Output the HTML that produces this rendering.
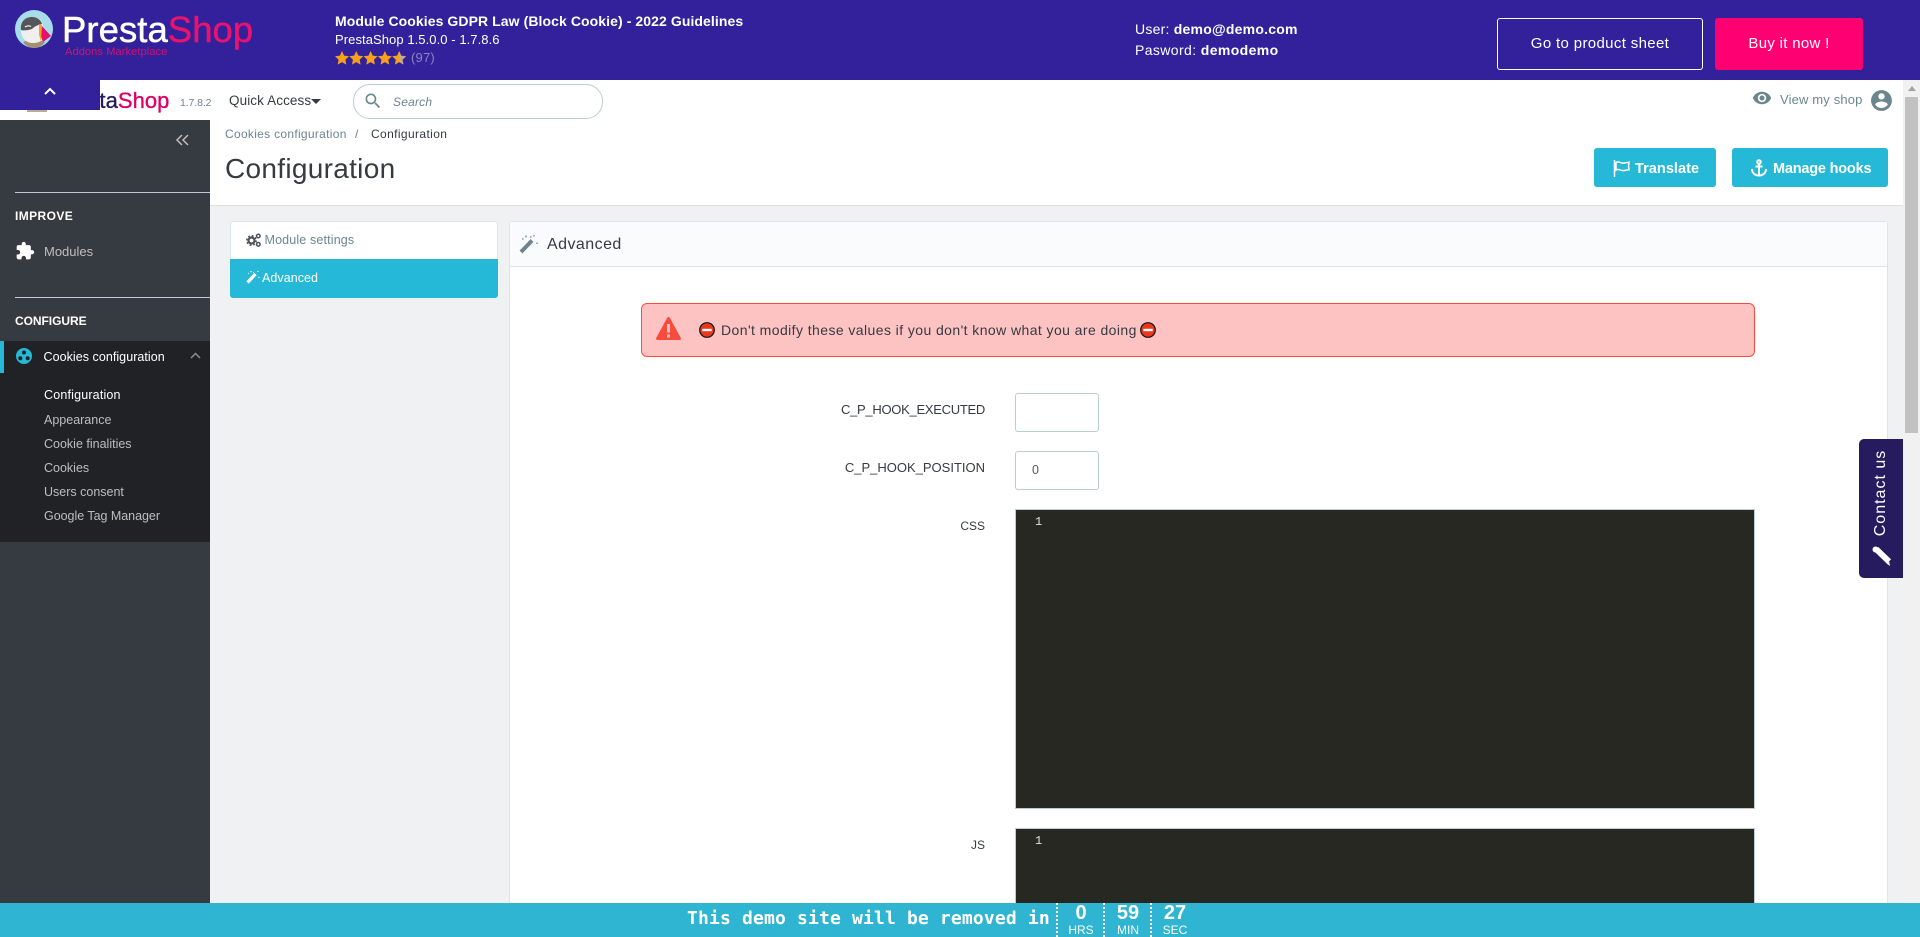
<!DOCTYPE html>
<html lang="en"><head><meta charset="utf-8"><title>Configuration</title>
<style>
html,body{margin:0;padding:0;width:1920px;height:937px;overflow:hidden;background:#fff}
body{position:relative;font-family:"Liberation Sans",sans-serif;color:#363a41}
.a{position:absolute}
.t{position:absolute;white-space:nowrap;height:20px;line-height:20px}
.r{text-align:right}
.b{font-weight:700}
svg{position:absolute;display:block}
</style></head><body>

<!-- content background -->
<div class="a" style="left:210px;top:206px;width:1710px;height:731px;background:#eff1f2"></div>
<div class="a" style="left:210px;top:205px;width:1693px;height:1px;background:#dfdfdf"></div>

<!-- nav -->
<div class="t" style="left:54px;top:91px;font-size:22px;color:#251b5b;letter-spacing:.05px;-webkit-text-stroke:.35px">Presta<span style="color:#df0067">Shop</span></div>
<div class="a" style="left:27px;top:110px;width:20px;height:2px;background:#b9ab97"></div>
<div class="t" style="left:180px;top:93px;font-size:10.5px;letter-spacing:-.1px;color:#6c868e">1.7.8.2</div>
<div class="t" style="left:229px;top:91px;font-size:13.5px;letter-spacing:.1px;color:#363a41">Quick Access</div>
<div class="a" style="left:311px;top:99px;width:0;height:0;border-left:5px solid transparent;border-right:5px solid transparent;border-top:5px solid #363a41"></div>
<div class="a" style="left:353px;top:84px;width:248px;height:33px;border:1px solid #bbcdd2;border-radius:17px"></div>
<svg style="left:363px;top:91px" width="20" height="20" viewBox="0 0 24 24" fill="#6c868e"><path d="M15.5 14h-.79l-.28-.27A6.47 6.47 0 0 0 16 9.5 6.5 6.5 0 1 0 9.5 16c1.61 0 3.09-.59 4.23-1.57l.27.28v.79l5 4.99L20.49 19l-4.99-5zm-6 0C7.01 14 5 11.99 5 9.5S7.01 5 9.5 5 14 7.01 14 9.5 11.99 14 9.5 14z"/></svg>
<div class="t" style="left:393px;top:92px;font-size:12px;font-style:italic;letter-spacing:.2px;color:#6c868e">Search</div>

<svg style="left:1752px;top:88px" width="20" height="20" viewBox="0 0 24 24" fill="#6c868e"><path d="M12 4.5C7 4.5 2.73 7.61 1 12c1.73 4.39 6 7.5 11 7.5s9.27-3.11 11-7.5c-1.73-4.39-6-7.5-11-7.5zM12 17c-2.76 0-5-2.24-5-5s2.24-5 5-5 5 2.24 5 5-2.24 5-5 5zm0-8c-1.66 0-3 1.34-3 3s1.34 3 3 3 3-1.34 3-3-1.34-3-3-3z"/></svg>
<div class="t" style="left:1780px;top:90px;font-size:13px;letter-spacing:.15px;color:#6c868e">View my shop</div>
<svg style="left:1869px;top:88px" width="25" height="25" viewBox="0 0 24 24" fill="#6c868e"><path d="M12 2C6.48 2 2 6.48 2 12s4.48 10 10 10 10-4.48 10-10S17.52 2 12 2zm0 3c1.66 0 3 1.34 3 3s-1.34 3-3 3-3-1.34-3-3 1.34-3 3-3zm0 14.2c-2.5 0-4.71-1.28-6-3.22.03-1.99 4-3.08 6-3.08 1.99 0 5.97 1.09 6 3.08-1.29 1.94-3.5 3.22-6 3.22z"/></svg>

<!-- page head -->
<div class="t" style="left:225px;top:124px;font-size:12px;letter-spacing:.3px;color:#6c868e">Cookies configuration</div>
<div class="t" style="left:355px;top:124px;font-size:12px;color:#6c868e">/</div>
<div class="t" style="left:371px;top:124px;font-size:12px;letter-spacing:.38px;color:#363a41">Configuration</div>
<div class="t" style="left:225px;top:159px;font-size:28px;color:#363a41;letter-spacing:.3px">Configuration</div>

<div class="a" style="left:1594px;top:148px;width:122px;height:39px;background:#25b9d7;border-radius:3px"></div>
<svg style="left:1613px;top:160px" width="18" height="17" viewBox="0 0 18 17" fill="none" stroke="#fff" stroke-width="1.5"><path d="M1.500 0v17M3 2.500c3-1.800 5 1.200 8 .6 2-.4 3.500-.6 5-.8-.6 2.600-.6 5 0 7.500-2 .2-3.500.5-5 .8-3 .6-5-2.400-8-.6z"/></svg>
<div class="t b" style="left:1635px;top:159px;font-size:14.5px;color:#fff;letter-spacing:.05px">Translate</div>
<div class="a" style="left:1732px;top:148px;width:156px;height:39px;background:#25b9d7;border-radius:3px"></div>
<svg style="left:1750px;top:159px" width="18" height="19" viewBox="0 0 18 19" fill="none" stroke="#fff" stroke-width="2"><circle cx="9" cy="3" r="1.800"/><path d="M5.500 7.500h7M9 5v12M2 10c0 4 3 6.500 7 6.500s7-2.500 7-6.500"/></svg>
<div class="t b" style="left:1773px;top:159px;font-size:14.5px;color:#fff;letter-spacing:-.2px">Manage hooks</div>

<!-- sidebar -->
<div class="a" style="left:0;top:120px;width:210px;height:817px;background:#363a41"></div>
<svg style="left:175px;top:134px" width="15" height="12" viewBox="0 0 15 12" fill="none" stroke="#bebebe" stroke-width="1.500"><path d="M7 1 2 6l5 5M13 1 8 6l5 5"/></svg>
<div class="a" style="left:15px;top:192px;width:195px;height:1px;background:#bbcdd2"></div>
<div class="t b" style="left:15px;top:206px;font-size:12px;color:#fff;letter-spacing:.4px">IMPROVE</div>
<svg style="left:15px;top:241px" width="20" height="20" viewBox="0 0 24 24" fill="#fff"><path d="M20.500 11H19V7c0-1.100-.9-2-2-2h-4V3.500C13 2.120 11.880 1 10.500 1S8 2.120 8 3.500V5H4c-1.100 0-1.990.9-1.990 2v3.800H3.500c1.490 0 2.700 1.210 2.700 2.700s-1.210 2.700-2.700 2.700H2V20c0 1.100.9 2 2 2h3.800v-1.500c0-1.490 1.210-2.700 2.700-2.700 1.490 0 2.700 1.210 2.700 2.700V22H17c1.100 0 2-.9 2-2v-4h1.500c1.380 0 2.500-1.120 2.500-2.500S21.880 11 20.500 11z"/></svg>
<div class="t" style="left:44px;top:242px;font-size:13px;color:#bebebe">Modules</div>
<div class="a" style="left:15px;top:297px;width:195px;height:1px;background:#bbcdd2"></div>
<div class="t b" style="left:15px;top:311px;font-size:12px;color:#fff;letter-spacing:-.05px">CONFIGURE</div>

<div class="a" style="left:0;top:341px;width:210px;height:201px;background:#202226"></div>
<div class="a" style="left:0;top:341px;width:4px;height:32px;background:#25b9d7"></div>
<svg style="left:16px;top:348px" width="16" height="16" viewBox="0 0 16 16"><circle cx="8" cy="8" r="8" fill="#25b9d7"/><circle cx="8" cy="4.500" r="2" fill="#202226"/><circle cx="4.300" cy="10.300" r="2" fill="#202226"/><circle cx="11.700" cy="10.300" r="2" fill="#202226"/></svg>
<div class="t" style="left:43.500px;top:347px;font-size:12.500px;color:#fff;letter-spacing:.05px">Cookies configuration</div>
<svg style="left:190px;top:352px" width="11" height="7" viewBox="0 0 11 7" fill="none" stroke="#8a9094" stroke-width="1.500"><path d="M1 6l4.500-4.500L10 6"/></svg>
<div class="t" style="left:44px;top:385px;font-size:12.500px;color:#fff;letter-spacing:.18px">Configuration</div>
<div class="t" style="left:44px;top:410px;font-size:12.500px;color:#bebebe">Appearance</div>
<div class="t" style="left:44px;top:434px;font-size:12.500px;color:#bebebe">Cookie finalities</div>
<div class="t" style="left:44px;top:458px;font-size:12.500px;color:#bebebe">Cookies</div>
<div class="t" style="left:44px;top:482px;font-size:12.500px;color:#bebebe">Users consent</div>
<div class="t" style="left:44px;top:506px;font-size:12.500px;color:#bebebe;letter-spacing:-.03px">Google Tag Manager</div>

<!-- tabs -->
<div class="a" style="left:230px;top:221px;width:268px;height:38px;background:#fff;border:1px solid #dbe6e9;border-bottom:0;box-sizing:border-box;border-radius:3px 3px 0 0"></div>
<svg style="left:246px;top:233px" width="15" height="14" viewBox="0 0 15 14" fill="none" stroke="#4d5258"><circle cx="5.500" cy="7.500" r="3" stroke-width="2.200"/><circle cx="5.500" cy="7.500" r="4.700" stroke-width="1.500" stroke-dasharray="1.900 1.800"/><circle cx="12.300" cy="3" r="1.800" stroke-width="1.500"/><circle cx="12.300" cy="11.300" r="1.800" stroke-width="1.500"/></svg>
<div class="t" style="left:264.500px;top:230px;font-size:12.500px;color:#6c868e;letter-spacing:.15px">Module settings</div>
<div class="a" style="left:230px;top:259px;width:268px;height:39px;background:#25b9d7;border-radius:0 0 3px 3px"></div>
<svg style="left:246px;top:270px" width="14" height="14" viewBox="0 0 14 14" fill="none" stroke="#fff"><path d="M1.500 12.500 9.500 4" stroke-width="3.200"/><path d="M2 3.500h.8M5 1v1.300M12 1v1M13 7v1M7 2.500h.8" stroke-width="1.200"/></svg>
<div class="t" style="left:262px;top:268px;font-size:12.500px;color:#fff;letter-spacing:.05px">Advanced</div>

<!-- card -->
<div class="a" style="left:509px;top:221px;width:1379px;height:716px;background:#fff;border:1px solid #dbe6e9;border-bottom:0;box-sizing:border-box;border-radius:3px 3px 0 0"></div>
<div class="a" style="left:510px;top:222px;width:1377px;height:45px;background:#fafbfc;border-bottom:1px solid #dbe6e9;box-sizing:border-box"></div>
<svg style="left:519px;top:234px" width="20" height="20" viewBox="0 0 20 20" fill="none" stroke="#6c868e"><path d="M2 18 13 6.500" stroke-width="4"/><path d="M3 5h1.500M7 1.500v2M15 1v1.500M18 8.500v1.500M11 3h1.500" stroke-width="1.300"/></svg>
<div class="t" style="left:547px;top:235px;font-size:16px;color:#363a41;letter-spacing:.45px">Advanced</div>

<!-- alert -->
<div class="a" style="left:641px;top:303px;width:1114px;height:54px;background:#fdc3c3;border:1px solid #f54c3e;box-sizing:border-box;border-radius:6px"></div>
<svg style="left:656px;top:317px" width="25" height="23" viewBox="0 0 25 23"><path d="M12.500 0c.6 0 1 .3 1.300.8L24.800 21c.5 1-.1 2-1.200 2H1.400C.3 23-.3 22 .2 21L11.200.8c.3-.5.7-.8 1.300-.8z" fill="#f54c3e"/><rect x="11" y="7" width="3" height="8.500" fill="#fdc3c3"/><rect x="11" y="17.500" width="3" height="3" fill="#fdc3c3"/></svg>
<svg style="left:699px;top:322px" width="16" height="16" viewBox="0 0 16 16"><circle cx="8" cy="8" r="7.300" fill="#e8391d" stroke="#111" stroke-width="1.200"/><rect x="3.300" y="6.800" width="9.400" height="2.400" fill="#fff"/></svg>
<div class="t" style="left:721px;top:320px;font-size:14px;color:#363a41;letter-spacing:.42px">Don't modify these values if you don't know what you are doing</div>
<svg style="left:1140px;top:322px" width="16" height="16" viewBox="0 0 16 16"><circle cx="8" cy="8" r="7.300" fill="#e8391d" stroke="#111" stroke-width="1.200"/><rect x="3.300" y="6.800" width="9.400" height="2.400" fill="#fff"/></svg>

<!-- form -->
<div class="t r" style="right:935px;top:400px;font-size:13px;color:#363a41;letter-spacing:-.28px">C_P_HOOK_EXECUTED</div>
<div class="a" style="left:1015px;top:393px;width:84px;height:39px;border:1px solid #bbcdd2;box-sizing:border-box;border-radius:3px;background:#fff"></div>
<div class="t r" style="right:935px;top:458px;font-size:13px;color:#363a41">C_P_HOOK_POSITION</div>
<div class="a" style="left:1015px;top:451px;width:84px;height:39px;border:1px solid #bbcdd2;box-sizing:border-box;border-radius:3px;background:#fff"></div>
<div class="t" style="left:1032px;top:460px;font-size:12.500px;color:#4d5a60">0</div>
<div class="t r" style="right:935px;top:516px;font-size:12px;color:#363a41">CSS</div>
<div class="a" style="left:1015px;top:509px;width:740px;height:300px;background:#272822;border:1px solid #bbcdd2;box-sizing:border-box"></div>
<div class="t" style="left:1035px;top:512px;font-size:12px;font-family:'Liberation Mono',monospace;color:#e0e0e0">1</div>
<div class="t r" style="right:935px;top:835px;font-size:12px;color:#363a41">JS</div>
<div class="a" style="left:1015px;top:828px;width:740px;height:109px;background:#272822;border:1px solid #bbcdd2;border-bottom:0;box-sizing:border-box"></div>
<div class="t" style="left:1035px;top:831px;font-size:12px;font-family:'Liberation Mono',monospace;color:#e0e0e0">1</div>

<!-- scrollbar -->
<div class="a" style="left:1903px;top:80px;width:17px;height:857px;background:#f1f1f1"></div>
<div class="a" style="left:1908px;top:86px;width:0;height:0;border-left:4px solid transparent;border-right:4px solid transparent;border-bottom:5px solid #a3a3a3"></div>
<div class="a" style="left:1905px;top:97px;width:13px;height:336px;background:#c1c1c1"></div>

<!-- contact -->
<div class="a" style="left:1859px;top:439px;width:44px;height:139px;background:#261b5e;border-radius:5px 0 0 5px"></div>
<div class="a" style="left:1881px;top:492.500px;transform:translate(-50%,-50%) rotate(-90deg);white-space:nowrap;font-size:16px;line-height:20px;color:#fff;letter-spacing:1px">Contact us</div>
<svg style="left:1871px;top:546px" width="20" height="21" viewBox="0 0 20 21"><path d="M5 3 18 15.500" stroke="#fff" stroke-width="6" fill="none"/><path d="M15.500 17.500 19 20l-.8-4.500z" fill="#fff"/><circle cx="4.500" cy="3.500" r="3" fill="#fff"/></svg>

<!-- top banner -->
<div class="a" style="left:0;top:0;width:1920px;height:80px;background:#33219b"></div>
<svg style="left:15px;top:10px" width="38" height="38" viewBox="0 0 38 38">
<circle cx="19" cy="19" r="19" fill="#a6dcec"/>
<path d="M8 32q11-4 22 0q-4 6-11 6t-11-6z" fill="#a58f72"/>
<path d="M6 20C5 12 10 7 17 7c6 0 10 3 11 9l1 12c-3 4-7 5-11 5C11 33 6 28 6 20z" fill="#efefef"/>
<path d="M6 20C5 12 10 7 17 7c5 0 9 3 10 7-5 1-8 3-10 5-3 1-8 2-11 1z" fill="#55565a"/>
<path d="M26 15l10 11-8 6-3-8z" fill="#e5106e"/>
<path d="M24 14l3 1-1 16-2-6z" fill="#f4a11d"/>
<path d="M10 17c2-1.500 4-1.500 6-.5" stroke="#fff" stroke-width="1.200" fill="none"/>
</svg>
<div class="t" style="left:62px;top:10px;height:40px;line-height:40px;font-size:36.500px;color:#fff;letter-spacing:.05px;-webkit-text-stroke:.5px">Presta<span style="color:#e8126f">Shop</span></div>
<div class="t" style="left:65px;top:42px;font-size:11px;color:#d4116d;letter-spacing:.12px">Addons Marketplace</div>

<div class="t b" style="left:335px;top:11px;font-size:14px;color:#fff;letter-spacing:.08px">Module Cookies GDPR Law (Block Cookie) - 2022 Guidelines</div>
<div class="t" style="left:335px;top:30px;font-size:13px;color:#fff;letter-spacing:.07px">PrestaShop 1.5.0.0 - 1.7.8.6</div>
<svg style="left:335px;top:51px" width="72" height="14" viewBox="0 0 72 14">
<defs><linearGradient id="h"><stop offset="50%" stop-color="#f9a01b"/><stop offset="50%" stop-color="#c9a98c"/></linearGradient></defs>
<g fill="#f9a01b"><path d="M7 0l2.100 4.600 4.900.6-3.600 3.400.9 5L7 11.100 2.700 13.600l.9-5L0 5.200l4.900-.6z"/><path d="M21.300 0l2.100 4.600 4.900.6-3.600 3.400.9 5-4.300-2.500-4.300 2.500.9-5-3.600-3.400 4.900-.6z"/><path d="M35.600 0l2.100 4.600 4.900.6-3.600 3.400.9 5-4.300-2.500-4.300 2.500.9-5-3.600-3.400 4.900-.6z"/><path d="M49.900 0l2.100 4.600 4.900.6-3.600 3.400.9 5-4.300-2.500-4.300 2.500.9-5-3.600-3.400 4.900-.6z"/></g>
<path d="M64.200 0l2.100 4.600 4.900.6-3.600 3.400.9 5-4.300-2.500-4.300 2.500.9-5-3.600-3.400 4.900-.6z" fill="url(#h)"/>
</svg>
<div class="t" style="left:411px;top:48px;font-size:13px;color:#8d84bb;letter-spacing:.2px">(97)</div>

<div class="t" style="left:1135px;top:19px;font-size:14px;color:#fff;letter-spacing:.23px">User: <b>demo@demo.com</b></div>
<div class="t" style="left:1135px;top:40px;font-size:14px;color:#fff;letter-spacing:.39px">Pasword: <b>demodemo</b></div>
<div class="a" style="left:1497px;top:18px;width:206px;height:52px;border:1px solid #fff;box-sizing:border-box;border-radius:3px;color:#fff;font-size:15px;line-height:50px;text-align:center;letter-spacing:.35px">Go to product sheet</div>
<div class="a" style="left:1715px;top:18px;width:148px;height:52px;background:#ff0073;border-radius:3px;color:#fff;font-size:15px;line-height:52px;text-align:center;letter-spacing:.3px">Buy it now !</div>

<div class="a" style="left:0;top:80px;width:100px;height:30px;background:#33219b"></div>
<svg style="left:44px;top:87px" width="12" height="8" viewBox="0 0 12 8" fill="none" stroke="#fff" stroke-width="2"><path d="M1 7l5-5 5 5"/></svg>

<!-- bottom bar -->
<div class="a" style="left:0;top:903px;width:1920px;height:34px;background:#2fb5d2"></div>
<div class="t b" style="left:687px;top:909px;font-size:18px;font-family:'DejaVu Sans Mono','Liberation Mono',monospace;color:#fff;letter-spacing:.16px">This demo site will be removed in</div>
<div class="a" style="left:1056px;top:903px;height:34px;border-left:2px dotted #fff"></div>
<div class="a" style="left:1103px;top:903px;height:34px;border-left:2px dotted #fff"></div>
<div class="a" style="left:1150px;top:903px;height:34px;border-left:2px dotted #fff"></div>
<div class="t b" style="left:1058px;width:46px;top:903px;text-align:center;font-size:20px;color:#fff">0</div>
<div class="t" style="left:1058px;width:46px;top:922px;height:16px;line-height:16px;text-align:center;font-size:12px;color:#fff">HRS</div>
<div class="t b" style="left:1105px;width:46px;top:903px;text-align:center;font-size:20px;color:#fff">59</div>
<div class="t" style="left:1105px;width:46px;top:922px;height:16px;line-height:16px;text-align:center;font-size:12px;color:#fff">MIN</div>
<div class="t b" style="left:1152px;width:46px;top:903px;text-align:center;font-size:20px;color:#fff">27</div>
<div class="t" style="left:1152px;width:46px;top:922px;height:16px;line-height:16px;text-align:center;font-size:12px;color:#fff">SEC</div>

</body></html>
